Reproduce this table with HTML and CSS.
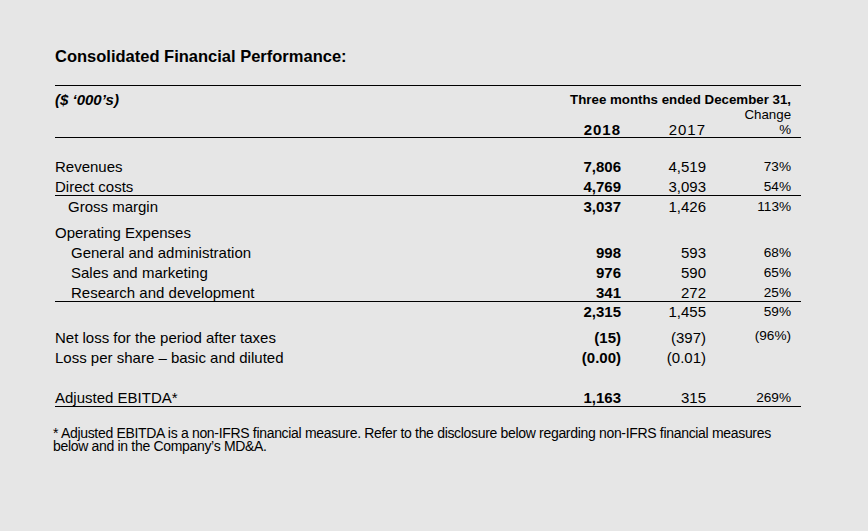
FILE: index.html
```html
<!DOCTYPE html>
<html lang="en">
<head>
<meta charset="utf-8">
<title>Consolidated Financial Performance</title>
<link rel="stylesheet" href="styles.css">
</head>
<body>
<div class="page">
  <h1 class="title">Consolidated Financial Performance:</h1>
  <table class="fin">
    <colgroup>
      <col class="c-label"><col class="c-cur"><col class="c-prev"><col class="c-chg"><col class="c-pad">
    </colgroup>
    <thead>
      <tr class="h1">
        <th class="unit">($ ‘000’s)</th>
        <th colspan="3" class="period">Three months ended December 31,</th>
        <th></th>
      </tr>
      <tr class="h2">
        <th></th><th></th><th></th>
        <th class="hchg">Change</th>
        <th></th>
      </tr>
      <tr class="h3">
        <th></th>
        <th class="year cur">2018</th>
        <th class="year">2017</th>
        <th class="hchg">%</th>
        <th></th>
      </tr>
    </thead>
    <tbody>
      <tr class="first">
        <td>Revenues</td><td class="num cur">7,806</td><td class="num">4,519</td><td class="pct">73%</td><td></td>
      </tr>
      <tr class="ul">
        <td>Direct costs</td><td class="num cur">4,769</td><td class="num">3,093</td><td class="pct">54%</td><td></td>
      </tr>
      <tr class="gross">
        <td class="ind1">Gross margin</td><td class="num cur">3,037</td><td class="num">1,426</td><td class="pct">113%</td><td></td>
      </tr>
      <tr class="section">
        <td>Operating Expenses</td><td></td><td></td><td></td><td></td>
      </tr>
      <tr>
        <td class="ind2">General and administration</td><td class="num cur">998</td><td class="num">593</td><td class="pct">68%</td><td></td>
      </tr>
      <tr>
        <td class="ind2">Sales and marketing</td><td class="num cur">976</td><td class="num">590</td><td class="pct">65%</td><td></td>
      </tr>
      <tr class="ul">
        <td class="ind2">Research and development</td><td class="num cur">341</td><td class="num">272</td><td class="pct">25%</td><td></td>
      </tr>
      <tr>
        <td></td><td class="num cur">2,315</td><td class="num">1,455</td><td class="pct">59%</td><td></td>
      </tr>
      <tr class="section">
        <td>Net loss for the period after taxes</td><td class="num cur">(15)</td><td class="num">(397)</td><td class="pct raised">(96%)</td><td></td>
      </tr>
      <tr>
        <td>Loss per share – basic and diluted</td><td class="num cur">(0.00)</td><td class="num">(0.01)</td><td class="pct"></td><td></td>
      </tr>
      <tr class="ul ebitda">
        <td>Adjusted EBITDA*</td><td class="num cur">1,163</td><td class="num">315</td><td class="pct">269%</td><td></td>
      </tr>
    </tbody>
  </table>
  <p class="note">* Adjusted EBITDA is a non-IFRS financial measure. Refer to the disclosure below regarding non-IFRS financial measures below and in the Company’s MD&amp;A.</p>
</div>
</body>
</html>
```
FILE: styles.css
```css
html, body {
  margin: 0;
  padding: 0;
  background: #e6e6e6;
}
body {
  width: 868px;
  height: 531px;
  overflow: hidden;
  font-family: "Liberation Sans", Arial, sans-serif;
  color: #000;
}
.page {
  padding: 46px 0 0 55px;
}
.title {
  margin: 0 0 19px 0;
  font-size: 16.5px;
  line-height: 20px;
  font-weight: bold;
}
.fin {
  width: 746px;
  table-layout: fixed;
  border-collapse: separate;
  border-spacing: 0;
  font-size: 15px;
}
.c-label { width: 485px; }
.c-cur { width: 81px; }
.c-prev { width: 85px; }
.c-chg { width: 85px; }
.c-pad { width: 10px; }

.fin th, .fin td {
  padding: 0;
  white-space: nowrap;
}
.fin thead th {
  line-height: 15px;
  font-weight: normal;
  text-align: right;
}
.fin .h1 th {
  border-top: 1px solid #000;
  padding-top: 6px;
}
.fin .h3 th {
  border-bottom: 1px solid #000;
}
.fin .unit {
  text-align: left;
  font-weight: bold;
  font-style: italic;
}
.fin .period {
  font-weight: bold;
  font-size: 13.3px;
}
.fin .hchg {
  font-size: 13.3px;
}
.fin .year {
  letter-spacing: 1px;
}
.fin .year.cur {
  font-weight: bold;
}

.fin td {
  line-height: 20px;
}
.fin tr.first td { padding-top: 19px; }
.fin tr.ul td {
  line-height: 16px;
  padding-top: 2px;
  border-bottom: 1px solid #000;
}
.fin tr.gross td { padding-top: 1px; }
.fin tr.section td { padding-top: 6px; }
.fin tr.ebitda td { padding-top: 22px; }

.fin .num { text-align: right; }
.fin .cur { font-weight: bold; }
.fin .pct {
  text-align: right;
  font-size: 13.6px;
}
.fin tr.section td.raised {
  vertical-align: top;
  line-height: 16px;
}
.ind1 { padding-left: 13px !important; }
.ind2 { padding-left: 16px !important; }

.note {
  margin: 20px 0 0 -2px;
  width: 735px;
  font-family: "Liberation Sans", Arial, sans-serif;
  font-size: 14px;
  letter-spacing: -0.32px;
  line-height: 13px;
}
```
